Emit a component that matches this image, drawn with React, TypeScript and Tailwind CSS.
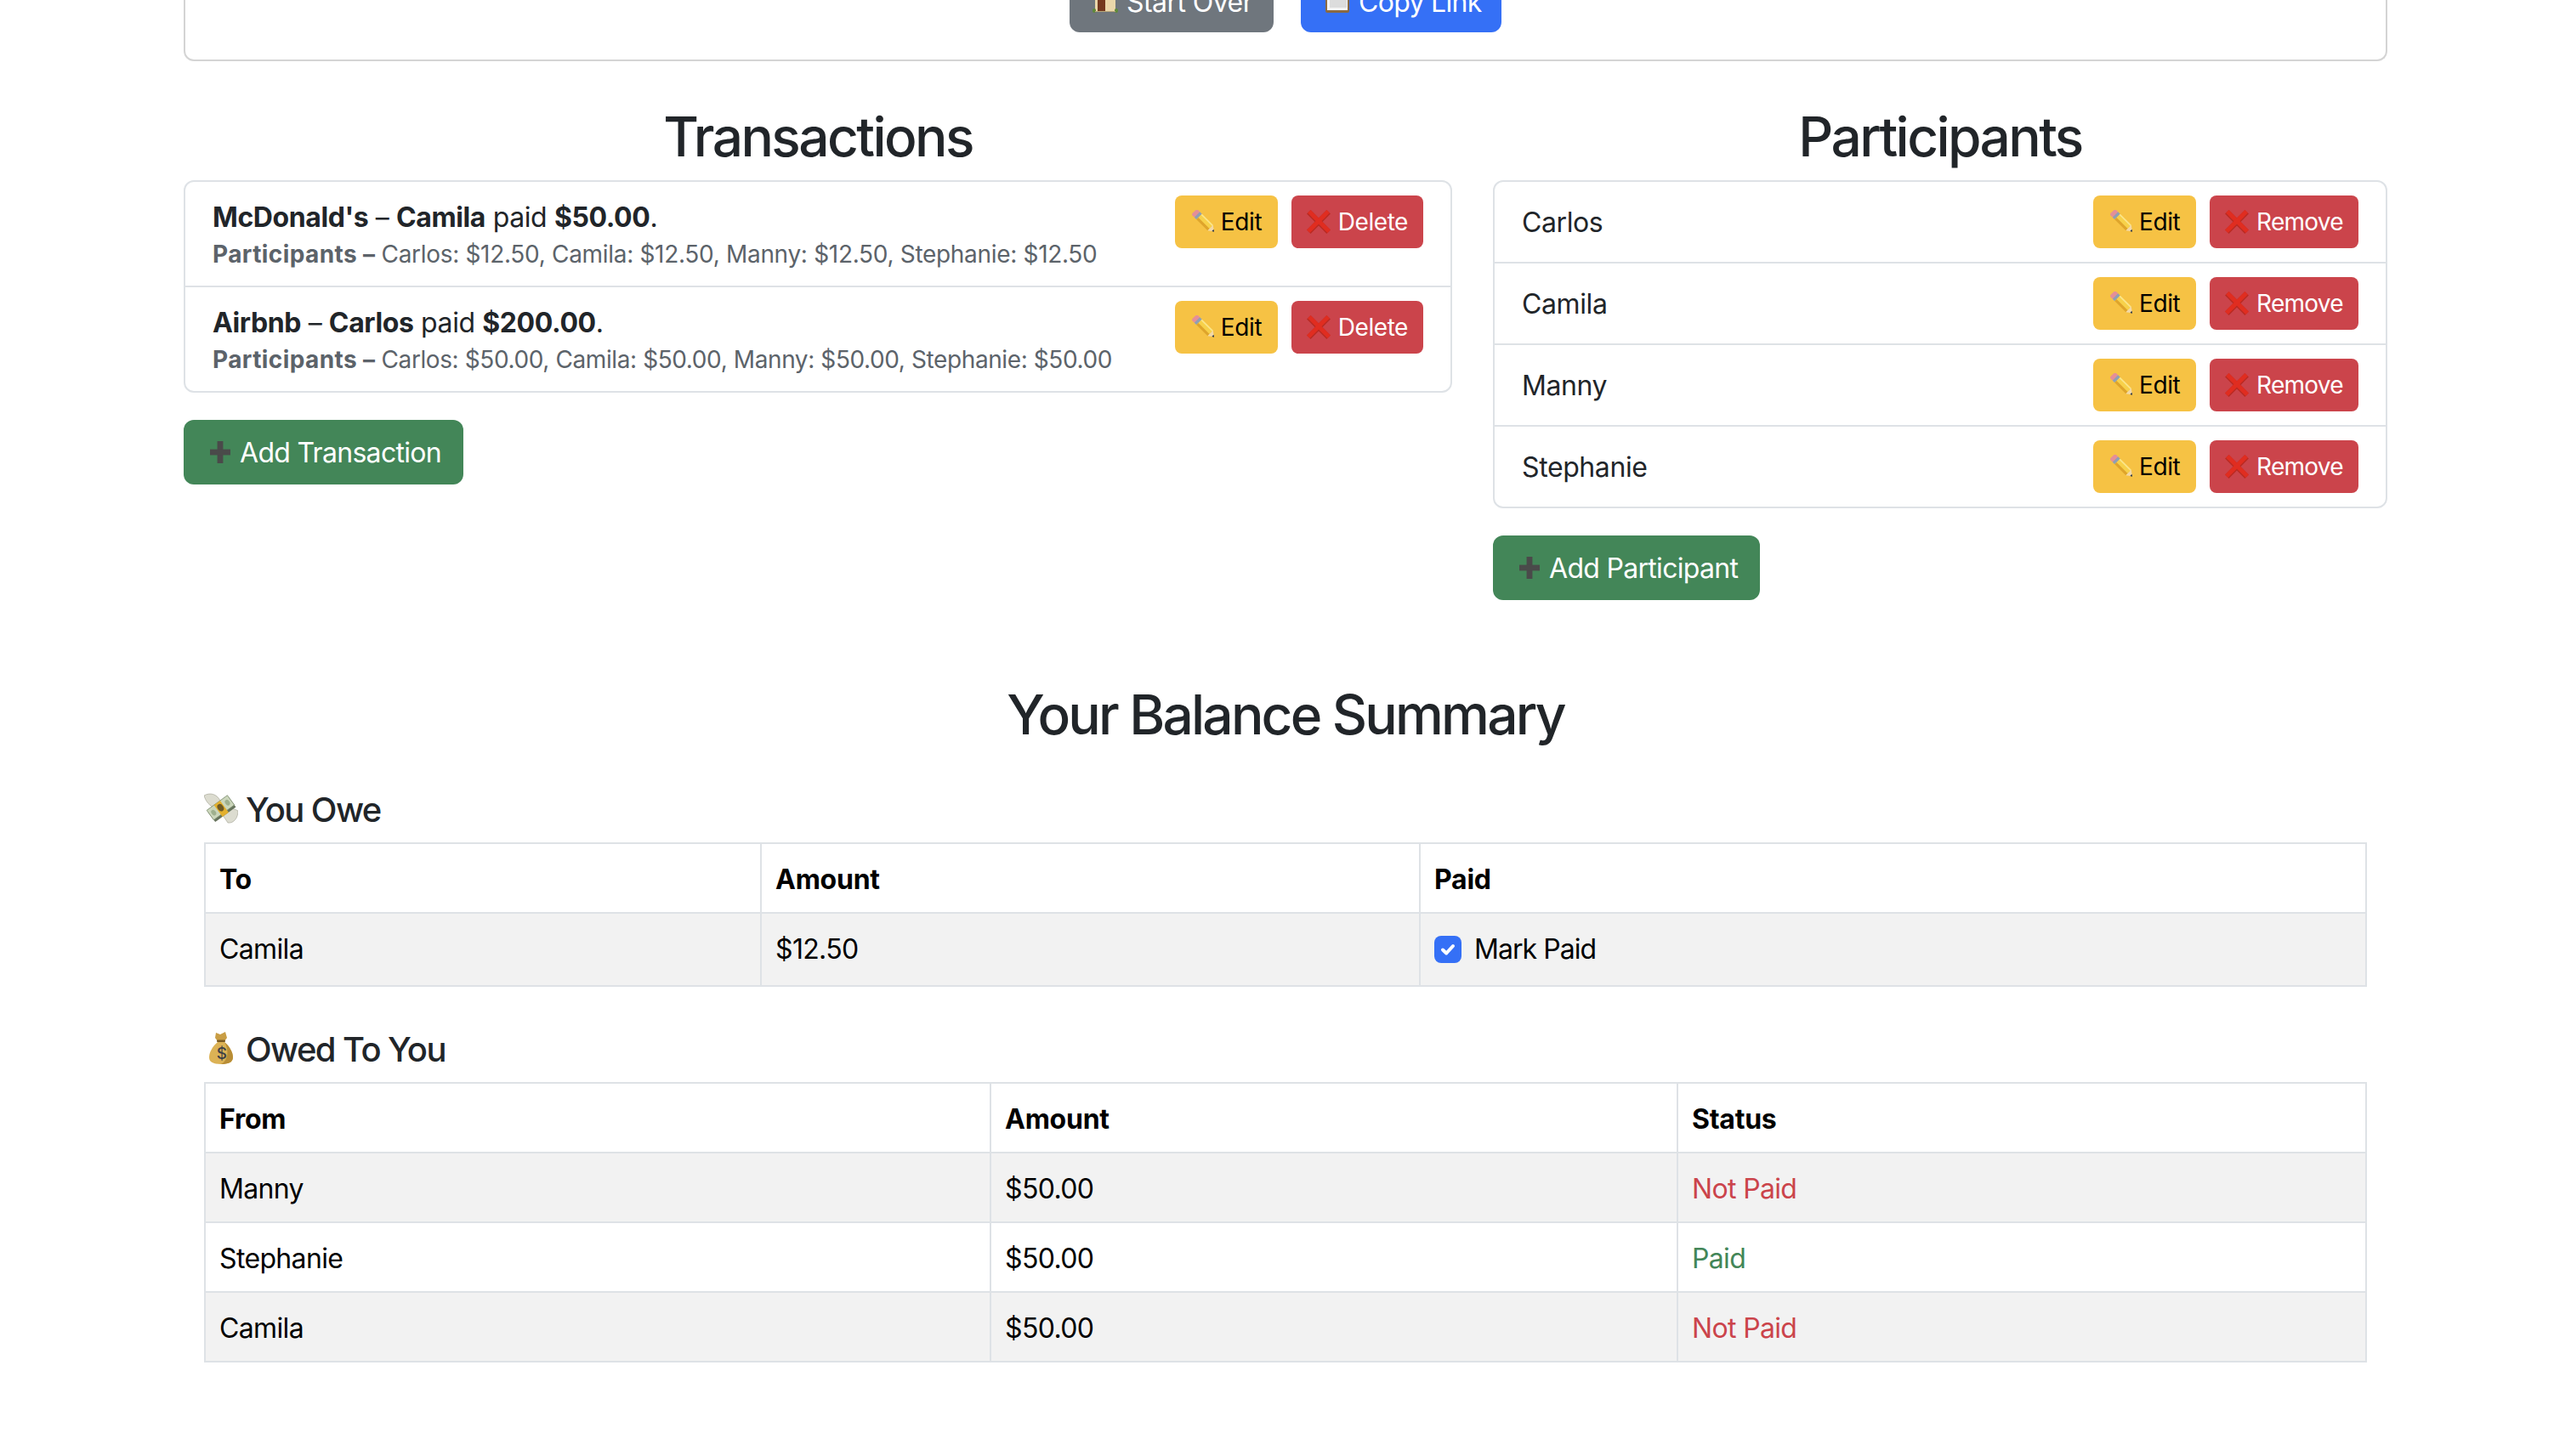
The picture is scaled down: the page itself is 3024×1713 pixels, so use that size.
import React from 'react';

const PencilIcon = () => (
  <svg viewBox="0 0 28 28" className="w-[28px] h-[28px] shrink-0">
    <g transform="translate(4.5 2) rotate(45)">
      <rect x="0" y="-4.6" width="6" height="9.2" rx="2" fill="#e58f96" />
      <rect x="5" y="-4.6" width="3.5" height="9.2" fill="#8f9fb3" />
      <rect x="8.5" y="-4.6" width="18.5" height="9.2" fill="#f7d14a" />
      <rect x="8.5" y="1.4" width="18.5" height="3.2" fill="#dfa42b" />
      <rect x="8.5" y="-4.6" width="18.5" height="1.6" fill="#fbe58c" />
      <polygon points="27,-4.6 33,0 27,4.6" fill="#f3d9a8" />
      <polygon points="31,-1.5 33.5,0 31,1.5" fill="#2b3440" />
    </g>
  </svg>
);

const CrossIcon = () => (
  <svg viewBox="0 0 28 28" className="w-[28px] h-[28px] shrink-0">
    <g transform="rotate(45 14 14)">
      <rect x="-2.5" y="10.8" width="33" height="6.4" fill="#b92a22" />
      <rect x="10.8" y="-2.5" width="6.4" height="33" fill="#b92a22" />
      <rect x="-2.5" y="10.8" width="33" height="5" fill="#e02d20" />
      <rect x="10.8" y="-2.5" width="5" height="33" fill="#e02d20" />
    </g>
  </svg>
);

const PlusIcon = () => (
  <svg viewBox="0 0 24 26" className="w-[24px] h-[26px] shrink-0">
    <rect x="8.6" y="0" width="6.8" height="26" fill="#4a4a4a" />
    <rect x="0" y="9.6" width="24" height="6.8" fill="#4a4a4a" />
  </svg>
);

const HouseIcon = () => (
  <svg viewBox="0 0 30 30" className="w-[30px] h-[30px] shrink-0">
    <rect x="3" y="0" width="24" height="28" fill="#ead7aa" />
    <rect x="6" y="4" width="9" height="24" fill="#74391f" />
    <rect x="8" y="6" width="5" height="8" fill="#6fa9dc" />
    <rect x="17.5" y="2" width="9" height="12" fill="#c9b27e" />
    <rect x="18.5" y="3" width="7" height="10" fill="#7db6e6" />
    <rect x="0" y="25" width="4" height="5" rx="2" fill="#5f8a3a" />
    <rect x="26" y="25" width="4" height="5" rx="2" fill="#5f8a3a" />
    <rect x="3" y="28" width="24" height="1" fill="#b8a67a" />
  </svg>
);

const ClipboardIcon = () => (
  <svg viewBox="0 0 28 30" className="w-[28px] h-[30px] shrink-0">
    <rect x="0" y="0" width="28" height="30" rx="2" fill="#8a6a43" />
    <rect x="2" y="0" width="24" height="27" fill="#f4f4f4" />
    <rect x="5" y="0" width="20" height="24" fill="#dcdcdc" />
  </svg>
);

const FlyingMoneyIcon = () => (
  <svg viewBox="0 0 40 36" className="w-[40px] h-[36px] shrink-0">
    <path d="M0 3 C7 -1 15 1 19 9 L13 17 C7 16 2 10 0 3 Z" fill="#dcdcd0" stroke="#a9a99b" strokeWidth="0.7" />
    <path d="M40 21 C40 29 35 36 28 35 L22 26 L29 18 C33 18 37 19 40 21 Z" fill="#dcdcd0" stroke="#a9a99b" strokeWidth="0.7" />
    <g transform="rotate(-36 20 18)">
      <rect x="5" y="13" width="30" height="14" fill="#66735c" />
      <rect x="5" y="10" width="30" height="14" fill="#cbd6bb" stroke="#7f8f72" strokeWidth="0.8" />
      <ellipse cx="10" cy="17" rx="2.6" ry="3.6" fill="#9fb08e" />
      <ellipse cx="30" cy="17" rx="2.6" ry="3.6" fill="#9fb08e" />
      <rect x="15.5" y="10" width="9" height="17" fill="#e3b02e" />
      <ellipse cx="20" cy="17" rx="3.4" ry="4.6" fill="#6f5a26" />
    </g>
  </svg>
);

const MoneyBagIcon = () => (
  <svg viewBox="0 0 28 38" className="w-[28px] h-[38px] shrink-0">
    <path d="M8 1 L13 3 L19 0 L21 7 L18 11 L10 11 L7 7 Z" fill="#c99e45" />
    <rect x="9" y="9.5" width="10" height="2.5" rx="1" fill="#7b5a22" />
    <path d="M10 12 L18 12 C24 17 28 24 28 30 C28 36 22 38 14 38 C6 38 0 36 0 30 C0 24 4 17 10 12 Z" fill="#dcb255" />
    <path d="M18 12 C24 17 28 24 28 30 C28 36 22 38 14 38 C22 34 24 22 18 12 Z" fill="#b88d36" />
    <text x="14" y="32" textAnchor="middle" fontSize="19" fontFamily="Inter, sans-serif" fontWeight="500" fill="#3d3f45">$</text>
  </svg>
);

const font = "font-['Inter','Liberation_Sans',sans-serif]";

const EditButton = () => (
  <button className="inline-flex items-center h-[62px] w-[121px] pl-[18px] rounded-[8px] bg-[#f6c244] text-[28px] tracking-[-0.4px] text-black">
    <PencilIcon />
    <span className="ml-[8px]">Edit</span>
  </button>
);

const DangerButton = ({ label }: { label: string }) => (
  <button
    className={`inline-flex items-center h-[62px] px-[18px] rounded-[8px] bg-[#cb444b] text-[28px] text-white ${
      label === 'Remove' ? 'tracking-[-0.7px]' : 'tracking-[-0.45px]'
    }`}
  >
    <CrossIcon />
    <span className="ml-[9px]">{label}</span>
  </button>
);

const AddButton = ({ label }: { label: string }) => (
  <button className="inline-flex items-center h-[76px] pl-[31px] pr-[26px] rounded-[12px] bg-[#438658] text-[32px] tracking-[-0.7px] text-white">
    <PlusIcon />
    <span className="ml-[11px] pt-[2px]">{label}</span>
  </button>
);

const transactions = [
  {
    title: "McDonald's",
    payer: 'Camila',
    amount: '$50.00',
    split: 'Carlos: $12.50, Camila: $12.50, Manny: $12.50, Stephanie: $12.50',
  },
  {
    title: 'Airbnb',
    payer: 'Carlos',
    amount: '$200.00',
    split: 'Carlos: $50.00, Camila: $50.00, Manny: $50.00, Stephanie: $50.00',
  },
];

const participants = ['Carlos', 'Camila', 'Manny', 'Stephanie'];

const owedToYou = [
  { name: 'Manny', amount: '$50.00', paid: false },
  { name: 'Stephanie', amount: '$50.00', paid: true },
  { name: 'Camila', amount: '$50.00', paid: false },
];

const cell = 'border-2 border-[#dee2e6] px-[16px] py-[16px] text-left leading-[48px] text-black tracking-[-0.65px]';
const rowCell = 'border-2 border-[#dee2e6] px-[16px] pt-[18px] pb-[14px] text-left leading-[48px] text-black tracking-[-0.65px]';
const headCell = 'border-2 border-[#dee2e6] px-[16px] pt-[18px] pb-[14px] text-left leading-[48px] text-black font-bold tracking-[-0.25px]';

const App: React.FC = () => {
  return (
    <div className={`${font} min-h-screen bg-white text-[#212529] text-[32px] leading-[48px] tracking-[-0.4px]`}>
      <div className="mx-auto w-[2592px]">
        <div className="-mt-[38px] flex justify-center gap-[32px] pb-[32px] border-2 border-t-0 border-[#d4d4d4] rounded-b-[12px]">
          <button className="inline-flex items-center h-[76px] w-[240px] pl-[27px] rounded-[12px] bg-[#6f767d] text-white tracking-[-0.55px]">
            <HouseIcon />
            <span className="ml-[10px] pt-[5px]">Start Over</span>
          </button>
          <button className="inline-flex items-center h-[76px] w-[236px] pl-[29px] rounded-[12px] bg-[#3570f6] text-white tracking-[-0.7px]">
            <ClipboardIcon />
            <span className="ml-[11px] pt-[5px]">Copy Link</span>
          </button>
        </div>

        <div className="flex gap-[48px] mt-[48px]">
          <section className="w-[1492px]">
            <h2 className="pt-[2px] text-[64px] font-[450] leading-[77px] text-center tracking-[-2.6px] mb-[13px]">Transactions</h2>
            <ul className="border-2 border-[#dee2e6] rounded-[12px] mb-[32px]">
              {transactions.map((t, i) => (
                <li
                  key={t.title}
                  className={`flex justify-between px-[32px] py-[16px] ${i > 0 ? 'border-t-2 border-[#dee2e6] h-[124px]' : 'h-[122px]'}`}
                >
                  <div>
                    <div className="h-[48px] pt-[2px] leading-[48px]">
                      <strong className="font-bold">{t.title}</strong> – <strong className="font-bold">{t.payer}</strong> paid{' '}
                      <strong className="font-bold">{t.amount}</strong>.
                    </div>
                    <div className={`text-[28px] leading-[42px] text-[#5c636a] ${i === 0 ? 'tracking-[-0.31px]' : 'tracking-[-0.4px]'}`}>
                      <strong className="font-bold tracking-[0.4px]">Participants – </strong>
                      {t.split}
                    </div>
                  </div>
                  <div className="flex gap-[16px] shrink-0">
                    <EditButton />
                    <DangerButton label="Delete" />
                  </div>
                </li>
              ))}
            </ul>
            <AddButton label="Add Transaction" />
          </section>

          <section className="w-[1052px]">
            <h2 className="pt-[2px] text-[64px] font-[450] leading-[77px] text-center tracking-[-2.6px] mb-[13px]">Participants</h2>
            <ul className="border-2 border-[#dee2e6] rounded-[12px] mb-[32px]">
              {participants.map((p, i) => (
                <li
                  key={p}
                  className={`flex items-center justify-between px-[32px] py-[16px] ${i > 0 ? 'border-t-2 border-[#dee2e6]' : ''}`}
                >
                  <span className="pt-[2px]">{p}</span>
                  <div className="flex gap-[16px]">
                    <EditButton />
                    <DangerButton label="Remove" />
                  </div>
                </li>
              ))}
            </ul>
            <AddButton label="Add Participant" />
          </section>
        </div>

        <h2 className="mt-[96px] text-[64px] font-[450] leading-[77px] text-center tracking-[-2.8px]">Your Balance Summary</h2>

        <div className="px-[24px] mt-[48px]">
          <h5 className="flex items-center h-[48px] text-[40px] font-[450] leading-[48px] tracking-[-1.6px] mb-[16px]">
            <FlyingMoneyIcon />
            <span className="ml-[9px] h-[48px] pt-[2px]">You Owe</span>
          </h5>
          <table className="w-full table-fixed border-collapse">
            <colgroup>
              <col className="w-[654px]" />
              <col className="w-[775px]" />
              <col />
            </colgroup>
            <thead>
              <tr>
                <th className={headCell}>To</th>
                <th className={headCell}>Amount</th>
                <th className={headCell}>Paid</th>
              </tr>
            </thead>
            <tbody>
              <tr className="bg-[#f2f2f2]">
                <td className={cell}>Camila</td>
                <td className={cell}>$12.50</td>
                <td className={cell}>
                  <label className="flex items-center h-[52px]">
                    <span className="flex items-center justify-center w-[32px] h-[32px] rounded-[8px] bg-[#3570f6]">
                      <svg viewBox="0 0 32 32" className="w-[32px] h-[32px]" fill="none" stroke="#fff" strokeWidth="4" strokeLinecap="round" strokeLinejoin="round">
                        <path d="M10 16.5l4.2 4L22 12" />
                      </svg>
                    </span>
                    <span className="ml-[15px] tracking-[-0.95px]">Mark Paid</span>
                  </label>
                </td>
              </tr>
            </tbody>
          </table>

          <h5 className="flex items-center h-[48px] text-[40px] font-[450] leading-[48px] tracking-[-1.6px] mt-[48px] mb-[16px]">
            <span className="flex justify-center w-[40px]">
              <MoneyBagIcon />
            </span>
            <span className="ml-[9px] h-[48px] pt-[2px]">Owed To You</span>
          </h5>
          <table className="w-full table-fixed border-collapse">
            <colgroup>
              <col className="w-[924px]" />
              <col className="w-[808px]" />
              <col />
            </colgroup>
            <thead>
              <tr>
                <th className={headCell}>From</th>
                <th className={headCell}>Amount</th>
                <th className={headCell}>Status</th>
              </tr>
            </thead>
            <tbody>
              {owedToYou.map((row, i) => (
                <tr key={row.name} className={i % 2 === 0 ? 'bg-[#f2f2f2]' : 'bg-white'}>
                  <td className={rowCell}>{row.name}</td>
                  <td className={rowCell}>{row.amount}</td>
                  <td className={`border-2 border-[#dee2e6] px-[16px] pt-[18px] pb-[14px] leading-[48px] tracking-[-0.65px] ${row.paid ? 'text-[#438658]' : 'text-[#cb444b]'}`}>
                    {row.paid ? 'Paid' : 'Not Paid'}
                  </td>
                </tr>
              ))}
            </tbody>
          </table>
        </div>
      </div>
    </div>
  );
};

export default App;
